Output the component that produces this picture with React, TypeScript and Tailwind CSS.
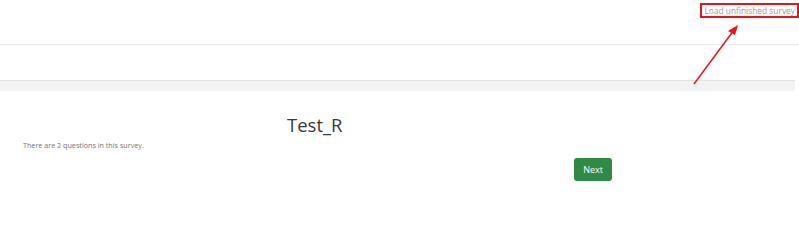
import React from 'react';

const App: React.FC = () => {
  return (
    <div className="relative w-[799px] h-[252px] overflow-hidden bg-white font-['Open_Sans',sans-serif]">
      {/* Top header */}
      <header className="h-[45px] flex justify-end items-start border-b border-[#ededed] shadow-[0_1px_2px_rgba(0,0,0,0.03)]">
        <a
          href="#"
          className="mt-[3px] px-[2px] h-[15px] leading-[12px] border-2 border-[#e8141b] text-[8.4px] text-[#9d9d9d]"
        >
          Load unfinished survey
        </a>
      </header>

      {/* Sub nav band */}
      <div className="h-[35px]" />

      {/* Progress bar track */}
      <div className="h-[11px] mr-[4px] bg-[#f3f3f3] border-t border-[#e2e2e2] rounded-br-[2px]" />

      {/* Survey welcome */}
      <main className="pt-[22px]">
        <h1 className="pl-[287px] text-[18.5px] leading-[24px] text-[#3a3a3a]">Test_R</h1>
        <p className="pl-[23px] mt-[3px] text-[7.2px] leading-[10px] text-[#777]">
          There are 2 questions in this survey.
        </p>
        <div className="pl-[574px] mt-[5px]">
          <button className="w-[38px] h-[23px] rounded-[3px] bg-[#2e8a45] text-white text-[9px]">
            Next
          </button>
        </div>
      </main>

      {/* Annotation arrow */}
      <svg className="absolute left-0 top-0 pointer-events-none" width="799" height="252">
        <line x1="694" y1="84" x2="734" y2="30" stroke="#f01414" strokeWidth="1.5" />
        <polygon points="738,25 728,31 735,35" fill="#f01414" />
      </svg>
    </div>
  );
};

export default App;
